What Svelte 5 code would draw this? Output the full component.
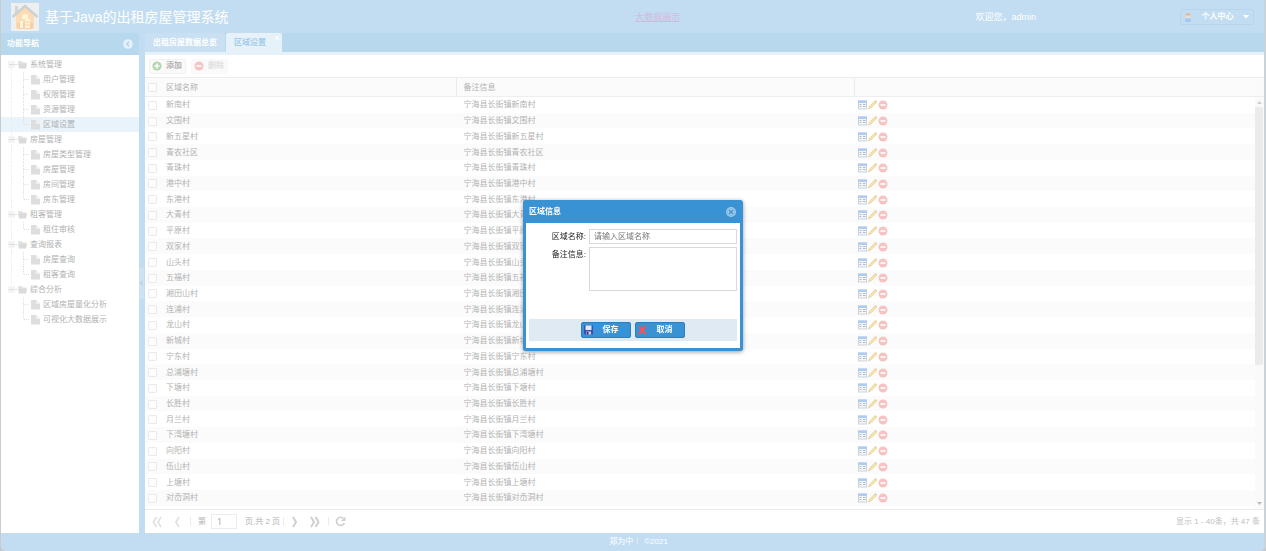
<script lang="ts">
  const menu = [
    { name: '系统管理', children: ['用户管理', '权限管理', '资源管理', '区域设置'] },
    { name: '房屋管理', children: ['房屋类型管理', '房屋管理', '房间管理', '房东管理'] },
    { name: '租客管理', children: ['租住审核'] },
    { name: '查询报表', children: ['房屋查询', '租客查询'] },
    { name: '综合分析', children: ['区域房屋量化分析', '可视化大数据展示'] }
  ];

  const areas = [
    '新南村', '文围村', '新五星村', '青农社区', '青珠村', '港中村', '东港村',
    '大青村', '平原村', '双家村', '山头村', '五福村', '湘田山村', '连浦村',
    '龙山村', '新城村', '宁东村', '总浦塘村', '下塘村', '长胜村', '月兰村',
    '下湾塘村', '向阳村', '伍山村', '上塘村', '对岙洞村'
  ];

  let current = $state('区域设置');
  let dialogOpen = $state(true);
  let areaName = $state('');
  let remark = $state('');

  function closeDialog() {
    dialogOpen = false;
  }
</script>

{#snippet minus()}
  <circle cx="5" cy="5" r="4.5" fill="#f6c3c3" />
  <path d="M2.5 5h5" stroke="#fff" stroke-width="1.6" />
{/snippet}

<div class="page">
  <header class="top">
    <div class="brand">
      <svg class="logo" viewBox="0 0 28 28" aria-hidden="true">
        <rect width="28" height="28" fill="#eef0f0" />
        <path d="M5 12v12q0 2 2 2h14q2 0 2-2V12l-9-8z" fill="#fbdcb4" />
        <path d="M6 20h16v4q0 2-2 2H8q-2 0-2-2z" fill="#f8d0a8" />
        <path d="M4 3h3v5l-3 3z" fill="#d4d6d6" />
        <path d="M1.500 14L14 3l12.500 11" fill="none" stroke="#cdd1d2" stroke-width="2.500" />
        <path d="M11 13q0-2 3-2t3 2v3h-6zM9 18h3v7H9zM14 16h5v9h-5z" fill="#fff3d8" />
        <path d="M14 19h5M14 22h5" stroke="#f8d0a8" />
      </svg>
      <h1>基于Java的出租房屋管理系统</h1>
    </div>
    <div class="top-link"><a href="#data">大数据展示</a></div>
    <span class="welcome">欢迎您，admin</span>
    <button class="user-btn" type="button">
      <svg width="8" height="10" viewBox="0 0 8 10" aria-hidden="true">
        <path d="M1 10V8q0-2 3-2t3 2v2z" fill="#a7c8f4" />
        <circle cx="4" cy="4" r="2.300" fill="#f6dcc4" />
        <path d="M1.200 3.500Q1.500 1 4 1t2.800 2.500z" fill="#d8b79c" />
      </svg>
      <span>个人中心</span>
      <svg width="6" height="4" viewBox="0 0 6 4" aria-hidden="true"><path d="M0 0h6L3 3.500z" fill="#fff" /></svg>
    </button>
  </header>

  <div class="middle">
    <nav class="sidebar">
      <div class="nav-title">
        <span>功能导航</span>
        <button type="button" class="collapse" aria-label="收起">
          <svg width="10" height="10" viewBox="0 0 10 10">
            <circle cx="5" cy="5" r="4.800" fill="#e6f2fb" />
            <path d="M6 2.700L3.800 5 6 7.300" fill="none" stroke="#b0d3ec" stroke-width="1.400" />
          </svg>
        </button>
      </div>
      <ul class="tree">
        {#each menu as group, g}
          <li class="node">
            <svg width="26" height="15" viewBox="0 0 26 15" aria-hidden="true">
              <path
                d={g === 0 ? 'M10.500 7v8' : g === menu.length - 1 ? 'M10.500 0v7' : 'M10.500 0v15'}
                stroke="#e8e8e8" stroke-dasharray="1 1"
              />
              <rect x="7" y="4" width="7" height="7" rx="1" fill="#f4f4f4" />
              <path d="M8 7.500h5M14 7.500h2" stroke="#dcdcdc" />
              <path d="M17 4h4l1 1.500h3.500V7H17z" fill="#e4e4e4" />
              <path d="M17 6.500h9L25 11.500h-7z" fill="#dadada" />
            </svg>
            <span>{group.name}</span>
          </li>
          {#each group.children as child, c}
            <li class="node" class:selected={child === current}>
              <svg width="39" height="15" viewBox="0 0 39 15" aria-hidden="true">
                {#if g < menu.length - 1}
                  <path d="M10.500 0v15" stroke="#ececec" stroke-dasharray="1 1" />
                {/if}
                <path
                  d={c === group.children.length - 1 ? 'M22.500 0v7.500h6' : 'M22.500 0v15M22.500 7.500h6'}
                  fill="none" stroke="#dedede" stroke-dasharray="1 1"
                />
                <path d="M30 3h5l4 4v5.500h-9z" fill="#dedede" />
                <path d="M35 3l4 4h-4z" fill="#f0f0f0" />
              </svg>
              <button type="button" onclick={() => (current = child)}>{child}</button>
            </li>
          {/each}
        {/each}
      </ul>
    </nav>

    <div class="splitter">
      <span class="handle">
        <svg width="4" height="6" viewBox="0 0 4 6" aria-hidden="true"><path d="M3.500 0v6L.5 3z" fill="#b5d5ee" /></svg>
      </span>
    </div>

    <main class="content">
      <div class="tabs">
        <button type="button" class="tab">出租房屋数据总览</button>
        <button type="button" class="tab active">
          区域设置
          <svg class="tab-close" width="4" height="4" viewBox="0 0 4 4" aria-hidden="true">
            <path d="M0 0l4 4M4 0L0 4" stroke="#fff" />
          </svg>
        </button>
      </div>

      <div class="toolbar">
        <button type="button" class="tool" onclick={() => (dialogOpen = true)}>
          <svg width="10" height="10" viewBox="0 0 10 10" aria-hidden="true">
            <circle cx="5" cy="5" r="4.600" fill="#b4d6ae" />
            <path d="M2.500 5h5M5 2.500v5" stroke="#fff" stroke-width="1.600" />
          </svg>
          添加
        </button>
        <button type="button" class="tool off" disabled>
          <svg width="10" height="10" viewBox="0 0 10 10" aria-hidden="true">{@render minus()}</svg>
          删除
        </button>
      </div>

      <div class="grid">
        <div class="grid-body">
          <table>
            <colgroup>
              <col class="c-check" />
              <col class="c-name" />
              <col class="c-remark" />
              <col />
            </colgroup>
            <thead>
              <tr>
                <th><input type="checkbox" aria-label="全选" /></th>
                <th>区域名称</th>
                <th>备注信息</th>
                <th></th>
              </tr>
            </thead>
            <tbody>
              {#each areas as area}
                <tr>
                  <td><input type="checkbox" aria-label={area} /></td>
                  <td>{area}</td>
                  <td>宁海县长街镇{area}</td>
                  <td>
                    <svg class="actions" width="30" height="10" viewBox="0 0 30 10" aria-hidden="true">
                      <path d="M0 .5h9v9H0z" fill="#c9d3de" />
                      <path d="M1 3h7v5.500H1z" fill="#f4f6f8" />
                      <path d="M0 .5h9V3H0z" fill="#aecbf4" />
                      <path d="M1.500 4.500h2M5 4.500h2.500M1.500 6.500h2M5 6.500h2.500" fill="none" stroke="#b3bcc6" />
                      <path d="M10 9.500l1-3 5.500-5.500q1.500-.8 2.500.8L13 8z" fill="#f8e3a8" />
                      <path d="M11 7l6-6M13 8l6-6" stroke="#e6cf9e" stroke-width=".7" />
                      <path d="M10 9.500l1-2.500 1.500 1.600z" fill="#d8cfc0" />
                      <path d="M16.500 1q1.500-.8 2.500.8" stroke="#f2bfae" fill="none" />
                      <g transform="translate(20 0)">{@render minus()}</g>
                    </svg>
                  </td>
                </tr>
              {/each}
            </tbody>
          </table>
        </div>
        <div class="scroll">
          <div class="scroll-head"></div>
          <svg width="9" height="10" viewBox="0 0 9 10" aria-hidden="true"><path d="M2 7h5L4.500 4z" fill="#cfcfcf" /></svg>
          <div class="thumb"></div>
          <div class="rail"></div>
          <svg width="9" height="10" viewBox="0 0 9 10" aria-hidden="true"><path d="M2 3h5L4.500 6z" fill="#bbb" /></svg>
        </div>
      </div>

      <div class="pager">
        <button type="button" aria-label="首页">
          <svg width="10" height="12" viewBox="0 0 10 12"><path d="M4.500 1L1.500 6l3 5M9 1L6 6l3 5" fill="none" stroke="#e2e2e2" stroke-width="1.800" /></svg>
        </button>
        <button type="button" class="prev" aria-label="上一页">
          <svg width="6" height="12" viewBox="0 0 6 12"><path d="M5 1L2 6l3 5" fill="none" stroke="#e2e2e2" stroke-width="1.800" /></svg>
        </button>
        <i class="sep"></i>
        <label for="page-no">第</label>
        <input id="page-no" class="page-no" type="text" value="1" />
        <span class="total">页,共 2 页</span>
        <i class="sep"></i>
        <button type="button" class="next" aria-label="下一页">
          <svg width="6" height="12" viewBox="0 0 6 12"><path d="M1 1l3 5-3 5" fill="none" stroke="#cfcfcf" stroke-width="2" /></svg>
        </button>
        <button type="button" class="last" aria-label="末页">
          <svg width="10" height="12" viewBox="0 0 10 12"><path d="M1 1l3 5-3 5M5.500 1l3 5-3 5" fill="none" stroke="#cfcfcf" stroke-width="2" /></svg>
        </button>
        <i class="sep"></i>
        <button type="button" class="refresh" aria-label="刷新">
          <svg width="11" height="11" viewBox="0 0 11 11">
            <path d="M8.600 2.500A4.100 4.100 0 1 0 9.400 7" fill="none" stroke="#d0d0d0" stroke-width="1.700" />
            <path d="M10.500.5v4.500H6z" fill="#d0d0d0" />
          </svg>
        </button>
        <span class="count">显示 1 - 40条，共 47 条</span>
      </div>
    </main>
  </div>

  <footer class="bottom"><span>郑为中｜</span><span>©2021</span></footer>
</div>

{#if dialogOpen}
  <div class="mask">
    <div class="dialog" role="dialog" aria-labelledby="dialog-title">
      <div class="dialog-head">
        <span id="dialog-title">区域信息</span>
        <button type="button" class="dialog-close" aria-label="关闭" onclick={closeDialog}>
          <svg width="10" height="10" viewBox="0 0 10 10">
            <circle cx="5" cy="5" r="5" fill="#a5cbe9" />
            <path d="M3 3l4 4M7 3L3 7" stroke="#3892d3" stroke-width="1.200" />
            <circle cx="5" cy="5" r="3.700" fill="none" stroke="#6fafdf" stroke-width=".6" />
          </svg>
        </button>
      </div>
      <div class="dialog-body">
        <div class="field">
          <label for="area-name">区域名称:</label>
          <input id="area-name" type="text" placeholder="请输入区域名称" bind:value={areaName} />
        </div>
        <div class="field">
          <label for="area-remark">备注信息:</label>
          <textarea id="area-remark" bind:value={remark}></textarea>
        </div>
        <div class="dialog-foot">
          <button type="button" onclick={closeDialog}>
            <svg width="9" height="10" viewBox="0 0 9 10" aria-hidden="true">
              <path d="M0 0.500h9v9H1l-1-1z" fill="#3c4db4" />
              <path d="M1.500 .5h6v4.500h-6z" fill="#e4e9f8" />
              <path d="M2.500 6.500h4.500v3H2.500z" fill="#cdd2e4" />
              <path d="M3 7h1.500v2.500H3z" fill="#27337f" />
            </svg>
            <span>保存</span>
          </button>
          <button type="button" onclick={closeDialog}>
            <svg width="9" height="10" viewBox="0 0 9 10" aria-hidden="true">
              <path d="M1.200 1.500q3 3 6.500 7.500M7.700 1.200Q4 4.500 1 8.800" fill="none" stroke="#ff5053" stroke-width="2.200" />
            </svg>
            <span>取消</span>
          </button>
        </div>
      </div>
    </div>
  </div>
{/if}

<style>
:global(body) {
  margin: 0;
  background: #c4c6c8;
}
.page, .mask {
  font-family: "Liberation Sans", "Noto Sans CJK SC", sans-serif;
  font-size: 8px;
  line-height: 12px;
}
.page {
  box-sizing: border-box;
  min-height: 100vh;
  display: flex;
  flex-direction: column;
  border-left: 1px solid #c9cbcd;
  border-right: 2px solid #c9d3da;
  border-radius: 0 0 5px 5px;
  overflow: hidden;
  background: #c2ddf2;
  color: #b2b2b2;
}
button {
  font: inherit;
  color: inherit;
  background: none;
  border: 0;
  padding: 0;
  margin: 0;
  cursor: pointer;
}
svg {
  display: block;
  flex: none;
}
.top {
  height: 33px;
  display: flex;
  align-items: center;
  color: #fff;
  font-size: 9px;
  white-space: nowrap;
}
.brand {
  flex: 0 0 40%;
  display: flex;
  align-items: center;
}
.logo {
  width: 28px;
  height: 28px;
  margin-left: 10px;
}
h1 {
  margin: 0 0 0 6px;
  font-size: 14px;
  line-height: 20px;
  font-weight: 400;
}
.top-link {
  flex: 0 0 24%;
  text-align: center;
}
.top-link a {
  color: #cfbcdd;
}
.welcome {
  margin-left: auto;
  margin-right: 144px;
}
.user-btn {
  box-sizing: border-box;
  width: 74px;
  height: 16px;
  margin-right: 10px;
  padding: 0 4px 0 3px;
  display: flex;
  align-items: center;
  justify-content: space-between;
  border: 1px solid #b7d6ed;
  border-radius: 2px;
  font-size: 8px;
  font-weight: 700;
}
.middle {
  flex: 1;
  display: flex;
}
.sidebar {
  width: 138px;
  display: flex;
  flex-direction: column;
  background: #fff;
}
.nav-title {
  height: 22px;
  padding: 0 6px;
  display: flex;
  align-items: center;
  justify-content: space-between;
  background: #b8d8ee;
  color: #fff;
  font-weight: 700;
}
.tree {
  list-style: none;
  margin: 0;
  padding: 2px 0 0;
}
.node {
  height: 15px;
  display: flex;
  align-items: center;
  gap: 3px;
}
.node.selected {
  background: #e8f3fc;
}
.splitter {
  width: 6px;
  display: flex;
  align-items: center;
}
.handle {
  width: 5px;
  height: 31px;
  display: flex;
  align-items: center;
  background: #cde3f4;
}
.content {
  flex: 1;
  min-width: 0;
  display: flex;
  flex-direction: column;
  background: #fff;
}
.tabs {
  height: 19px;
  display: flex;
  gap: 1px;
  background: #b8d8ee;
  border-bottom: 3px solid #e7f1fa;
}
.tab {
  padding: 0 8px;
  background: #c9dff2;
  border-radius: 2px 2px 0 0;
  color: #fff;
  font-weight: 700;
}
.tab.active {
  position: relative;
  padding-right: 16px;
  background: #e7f1fa;
  color: #a5cdeb;
}
.tab-close {
  position: absolute;
  top: 3px;
  right: 3px;
}
.toolbar {
  height: 22px;
  padding-left: 4px;
  display: flex;
  align-items: center;
  gap: 5px;
}
.tool {
  box-sizing: border-box;
  height: 15px;
  width: 37px;
  padding-left: 2px;
  display: flex;
  align-items: center;
  gap: 4px;
  border: 1px solid #f2f2f2;
  border-radius: 2px;
  background: #fafafa;
  font-weight: 700;
}
.tool.off {
  color: #e0e0e0;
  border-color: #f9f9f9;
}
.grid {
  flex: 1;
  display: flex;
  border-top: 1px solid #eee;
  border-bottom: 1px solid #ebebeb;
}
.grid-body {
  flex: 1;
  min-width: 0;
  padding-bottom: 3px;
}
table {
  width: 100%;
  height: 100%;
  table-layout: fixed;
  border-collapse: separate;
  border-spacing: 0;
}
.c-check {
  width: 15px;
}
.c-name {
  width: 26.8%;
}
.c-remark {
  width: 35.8%;
}
th {
  box-sizing: border-box;
  height: 19px;
  padding: 1px 0 0 6px;
  background: #fbfbfb;
  border-bottom: 1px solid #eee;
  text-align: left;
  font-weight: 400;
}
th:nth-child(2), th:nth-child(3) {
  border-right: 1px solid #eaeaea;
}
td {
  padding: 1px 0 0 6px;
  line-height: 12px;
  white-space: nowrap;
}
td:first-child, th:first-child {
  padding-left: 3px;
}
td:last-child {
  padding-left: 3px;
}
tbody tr:nth-child(even) td {
  background: #fbfbfb;
}
td input, th input {
  appearance: none;
  display: block;
  box-sizing: border-box;
  width: 9px;
  height: 9px;
  margin: 0;
  border: 1px solid #eaeaea;
  border-radius: 1px;
  background: #fdfdfd;
}
.scroll {
  width: 9px;
  display: flex;
  flex-direction: column;
  background: #fafafa;
}
.scroll-head {
  box-sizing: border-box;
  height: 19px;
  border-bottom: 1px solid #eee;
}
.thumb {
  flex: 257;
  margin: 0 1px 0 0;
  background: #ebebeb;
}
.rail {
  flex: 134;
}
.pager {
  height: 23px;
  padding: 0 4px 0 7px;
  display: flex;
  align-items: center;
}
.prev {
  margin: 0 10px 0 12px;
}
.sep {
  width: 1px;
  height: 9px;
  background: #ececec;
}
.pager label {
  margin: 0 5px 0 7px;
}
.page-no {
  box-sizing: border-box;
  width: 26px;
  height: 15px;
  padding: 0 5px;
  margin: 0 8px 0 0;
  border: 1px solid #ececec;
  color: #a5a5a5;
  font: 9px "Open Sans", sans-serif;
}
.total {
  margin-right: 3px;
}
.next {
  margin: 0 12px 0 8px;
}
.last {
  margin-right: 8px;
}
.refresh {
  margin-left: 6px;
}
.count {
  margin-left: auto;
  color: #c0c0c0;
}
.bottom {
  height: 18px;
  display: flex;
  align-items: center;
  justify-content: center;
  gap: 3px;
  color: #fff;
  padding-left: 12px;
}
.mask {
  position: fixed;
  inset: 0;
  display: grid;
  place-items: center;
}
.dialog {
  box-sizing: border-box;
  width: 220px;
  border: 3px solid #3892d3;
  border-top: 0;
  border-radius: 3px;
  background: #3892d3;
  box-shadow: 0 1px 4px #999;
}
.dialog-head {
  height: 23px;
  padding: 0 4px 0 3px;
  display: flex;
  align-items: center;
  justify-content: space-between;
  color: #fff;
  font-weight: 700;
}
.dialog-body {
  padding: 6px 3px 7px;
  background: #fff;
}
.field {
  display: flex;
  align-items: flex-start;
  gap: 3px;
  margin-bottom: 3px;
  color: #222;
}
.field label {
  width: 57px;
  padding-top: 2px;
  text-align: right;
}
.field input, .field textarea {
  box-sizing: border-box;
  flex: 1;
  min-width: 0;
  height: 15px;
  margin: 0;
  padding: 0 4px;
  border: 1px solid #d9d9d9;
  border-radius: 0;
  background: #fff;
  color: #222;
  font: inherit;
  resize: none;
}
.field textarea {
  height: 44px;
}
.field input::placeholder {
  color: #777;
}
.dialog-foot {
  height: 22px;
  margin-top: 28px;
  display: flex;
  align-items: center;
  justify-content: center;
  gap: 4px;
  background: #dfeaf2;
}
.dialog-foot button {
  box-sizing: border-box;
  width: 50px;
  height: 16px;
  padding: 0 2px;
  display: flex;
  align-items: center;
  border: 1px solid #2a7fbe;
  border-radius: 2px;
  background: #3892d3;
  color: #fff;
  font-weight: 700;
}
.dialog-foot span {
  flex: 1;
  text-align: center;
}
</style>
